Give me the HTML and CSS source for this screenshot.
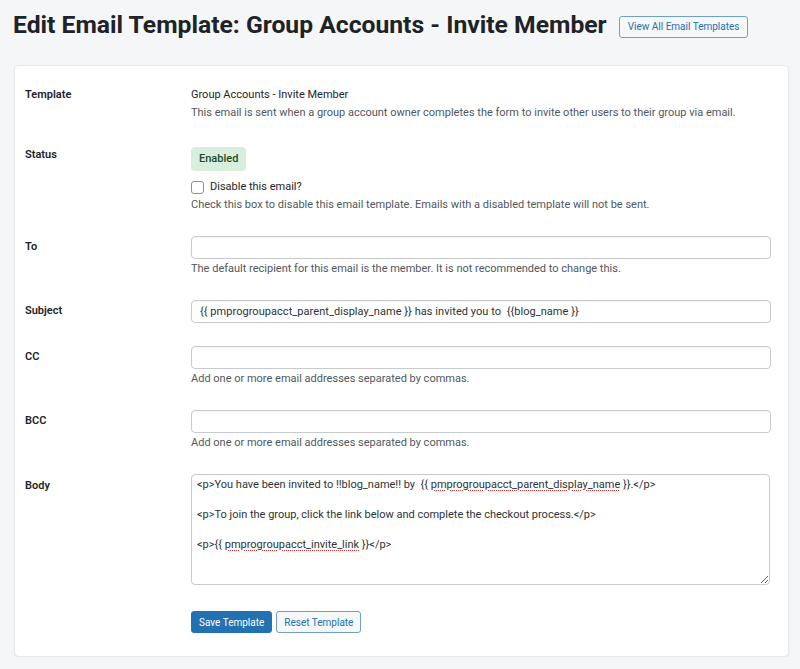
FILE: index.html
```html
<!DOCTYPE html>
<html lang="en">
<head>
    <meta charset="UTF-8">
    <meta name="viewport" content="width=device-width, initial-scale=1.0">
    <title>Edit Email Template</title>
    <link rel="stylesheet" href="styles.css">
</head>
<body>
    <div class="wrap">
        <div class="page-head">
            <h1>Edit Email Template: Group Accounts - Invite Member</h1>
            <a class="btn btn-secondary btn-head" href="#">View All Email Templates</a>
        </div>

        <form class="card">
            <div class="field field-text">
                <div class="field-label">Template</div>
                <div class="field-body">
                    <div class="value">Group Accounts - Invite Member</div>
                    <p class="description">This email is sent when a group account owner completes the form to invite other users to their group via email.</p>
                </div>
            </div>

            <div class="field field-text field-status">
                <div class="field-label">Status</div>
                <div class="field-body">
                    <span class="badge">Enabled</span>
                    <label class="check">
                        <input type="checkbox">
                        <span>Disable this email?</span>
                    </label>
                    <p class="description">Check this box to disable this email template. Emails with a disabled template will not be sent.</p>
                </div>
            </div>

            <div class="field">
                <div class="field-label">To</div>
                <div class="field-body">
                    <input class="text-input" type="text" value="">
                    <p class="description">The default recipient for this email is the member. It is not recommended to change this.</p>
                </div>
            </div>

            <div class="field">
                <div class="field-label">Subject</div>
                <div class="field-body">
                    <input class="text-input" type="text" value="{{ pmprogroupacct_parent_display_name }} has invited you to  {{blog_name }}">
                </div>
            </div>

            <div class="field">
                <div class="field-label">CC</div>
                <div class="field-body">
                    <input class="text-input" type="text" value="">
                    <p class="description">Add one or more email addresses separated by commas.</p>
                </div>
            </div>

            <div class="field">
                <div class="field-label">BCC</div>
                <div class="field-body">
                    <input class="text-input" type="text" value="">
                    <p class="description">Add one or more email addresses separated by commas.</p>
                </div>
            </div>

            <div class="field field-area">
                <div class="field-label">Body</div>
                <div class="field-body">
                    <div class="textarea" contenteditable="true" spellcheck="false">&lt;p&gt;You have been invited to !!blog_name!! by  {{ <span class="misspelt">pmprogroupacct_parent_display_name</span> }}.&lt;/p&gt;

&lt;p&gt;To join the group, click the link below and complete the checkout process.&lt;/p&gt;

&lt;p&gt;{{ <span class="misspelt">pmprogroupacct_invite_link</span> }}&lt;/p&gt;</div>
                </div>
            </div>

            <div class="actions">
                <button type="button" class="btn btn-primary">Save Template</button>
                <button type="button" class="btn btn-secondary">Reset Template</button>
            </div>
        </form>
    </div>
</body>
</html>
```
FILE: styles.css
```css
*{
    box-sizing: border-box;
}
body{
    margin: 0;
    background-color: #f5f6f7;
    color: #1d2327;
    font-family: Roboto, "Liberation Sans", sans-serif;
    font-size: 11px;
    line-height: 16px;
}
.wrap{
    padding: 0 11px 0 14px;
}
.page-head{
    display: flex;
    align-items: flex-start;
    gap: 12px;
    padding-top: 10px;
    & h1{
        margin: 0 0 0 -1px;
        font-size: 24.7px;
        line-height: 30px;
        font-weight: 700;
        color: #1d2327;
    }
}
.btn{
    display: inline-flex;
    align-items: center;
    height: 22px;
    padding: 0 7px;
    border: 1px solid #2271b1;
    border-radius: 3px;
    font-family: inherit;
    font-size: 10px;
    text-decoration: none;
    white-space: nowrap;
    cursor: pointer;
}
.btn-primary{
    background-color: #2271b1;
    color: #fff;
}
.btn-secondary{
    background-color: #f6f7f7;
    border-color: #6f9fcc;
    color: #2271b1;
}
.btn-head{
    margin-top: 6px;
    padding: 0 8px;
}
.card{
    display: block;
    margin-top: 25px;
    padding: 21px 17px 23px 10px;
    background-color: #fff;
    border: 1px solid #e8e9eb;
    border-radius: 5px;
    box-shadow: 0 1px 2px rgba(0, 0, 0, 0.07);
}
.field{
    display: grid;
    grid-template-columns: 166px 1fr;
    align-items: start;
    & + .field{
        margin-top: 23px;
    }
}
.field-label{
    padding-top: 3px;
    font-weight: 600;
    color: #1d2327;
}
.field-text .field-label{
    padding-top: 0;
}
.field-area .field-label{
    padding-top: 4px;
}
.field.field-status{
    margin-top: 26px;
}
.value{
    color: #1d2327;
}
.description{
    margin: 2px 0 0;
    color: #50575e;
}
.badge{
    display: inline-block;
    height: 24px;
    line-height: 24px;
    padding: 0 8px;
    border-radius: 4px;
    background-color: #d8efdd;
    color: #1e4a2a;
    font-weight: 500;
}
.check{
    display: flex;
    align-items: center;
    gap: 6px;
    margin-top: 8px;
    color: #1d2327;
    & input{
        appearance: none;
        width: 13px;
        height: 13px;
        margin: 0;
        border: 1px solid #8c8f94;
        border-radius: 3px;
        background-color: #fff;
    }
}
.text-input{
    display: block;
    width: 100%;
    height: 23px;
    margin: 0;
    padding: 0 8px;
    border: 1px solid #c9cacd;
    border-radius: 4px;
    background-color: #fff;
    box-shadow: inset 0 1px 1px rgba(0, 0, 0, 0.04);
    font-family: inherit;
    font-size: 11px;
    letter-spacing: 0.05px;
    color: #2c3338;
}
.textarea{
    width: calc(100% - 1px);
    height: 111px;
    padding: 2px 5px;
    border: 1px solid #c9cacd;
    border-radius: 4px;
    background-color: #fff;
    white-space: pre-wrap;
    line-height: 15px;
    color: #2c3338;
    overflow: auto;
    resize: both;
    outline: none;
}
.misspelt{
    text-decoration: underline dotted #d63638;
    text-decoration-thickness: 1px;
    text-underline-offset: 2px;
}
.actions{
    display: flex;
    gap: 4px;
    margin: 26px 0 0 166px;
}
```
